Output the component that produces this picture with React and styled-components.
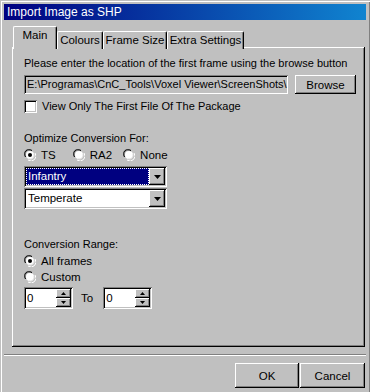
import React from 'react';
import styled, { createGlobalStyle } from 'styled-components';

const GlobalStyle = createGlobalStyle`
  body { margin: 0; background: #c0c0c0; }
  * { box-sizing: border-box; }
`;

const raised = `inset -1px -1px #000, inset 1px 1px #fff, inset -2px -2px #808080, inset 2px 2px #c0c0c0`;
const sunken = `inset 1px 1px #808080, inset -1px -1px #fff, inset 2px 2px #000, inset -2px -2px #c0c0c0`;

const Window = styled.div`
  width: 370px;
  height: 392px;
  background: #c0c0c0;
  box-shadow: inset 1px 1px #c0c0c0, inset 2px 2px #fff, inset -1px 0 #808080;
  padding: 4px 4px 0 4px;
  font-family: "Liberation Sans", Arial, sans-serif;
  font-size: 11px;
  color: #000;
  display: flex;
  flex-direction: column;
  overflow: hidden;
`;

const TitleBar = styled.div`
  height: 16px;
  background: linear-gradient(to right, #000080, #1084d0);
  color: #fff;
  font-size: 12px;
  line-height: 16px;
  padding-left: 3px;
`;

const TabStrip = styled.div`
  display: flex;
  align-items: flex-end;
  margin: 6px 0 -2px 9px;
  height: 23px;
  position: relative;
  z-index: 1;
`;

const Tab = styled.div`
  width: ${({ w }) => w}px;
  height: ${({ active }) => (active ? 23 : 18)}px;
  background: #c0c0c0;
  border-top: 1px solid #fff;
  border-left: 1px solid #fff;
  border-right: 1px solid #000;
  box-shadow: inset -1px 0 #808080;
  border-radius: 2px 2px 0 0;
  text-align: center;
  line-height: ${({ active }) => (active ? 17 : 16)}px;
  font-size: 11.5px;
`;

const Panel = styled.div`
  width: 353px;
  height: 300px;
  margin-left: 8px;
  background: #c0c0c0;
  box-shadow: inset -1px -1px #000, inset 1px 1px #fff, inset -2px -2px #808080;
  padding: 10px 0 0 12px;
  display: flex;
  flex-direction: column;
`;

const Label = styled.div`
  height: 13px;
  line-height: 13px;
  margin-top: ${({ mt }) => mt || 0}px;
  white-space: nowrap;
`;

const Row = styled.div`
  display: flex;
  align-items: center;
  gap: ${({ gap }) => gap || 0}px;
  margin-top: ${({ mt }) => mt || 0}px;
`;

const Field = styled.div`
  width: ${({ w }) => w}px;
  height: ${({ h }) => h || 19}px;
  background: ${({ bg }) => bg || '#fff'};
  box-shadow: ${sunken};
  padding: 0 3px;
  line-height: ${({ h }) => h || 19}px;
  white-space: nowrap;
  overflow: hidden;
  display: flex;
  align-items: center;
`;

const Button = styled.div`
  width: ${({ w }) => w}px;
  height: ${({ h }) => h}px;
  box-shadow: ${raised};
  background: #c0c0c0;
  display: flex;
  align-items: center;
  justify-content: center;
  font-size: 11.5px;
`;

const ArrowButton = styled.div`
  width: ${({ w }) => w}px;
  height: ${({ h }) => h}px;
  box-shadow: ${raised};
  background: #c0c0c0;
  display: flex;
  align-items: center;
  justify-content: center;
  flex-shrink: 0;
`;

const Combo = styled.div`
  width: 143px;
  height: 21px;
  background: #fff;
  box-shadow: ${sunken};
  padding: 2px;
  display: flex;
  align-items: stretch;
  margin-top: ${({ mt }) => mt || 0}px;
`;

const ComboText = styled.div`
  flex: 1;
  padding-left: 2px;
  line-height: 17px;
  font-size: 11.5px;
  color: ${({ sel }) => (sel ? '#fff' : '#000')};
  background: ${({ sel }) => (sel ? '#000080' : 'transparent')};
  outline: ${({ sel }) => (sel ? '1px dotted #fff' : 'none')};
  outline-offset: -1px;
`;

const Check = styled.div`
  width: 13px;
  height: 13px;
  background: #fff;
  box-shadow: ${sunken};
  flex-shrink: 0;
`;

const Option = styled.div`
  display: flex;
  align-items: center;
  gap: 5px;
  height: 13px;
  font-size: 11.5px;
  margin-right: ${({ mr }) => mr || 0}px;
`;

const Spin = styled.div`
  width: 49px;
  height: 22px;
  background: #fff;
  box-shadow: ${sunken};
  padding: 2px;
  display: flex;
`;

const SpinText = styled.div`
  flex: 1;
  padding-left: 1px;
  line-height: 18px;
  font-size: 11.5px;
`;

const SpinButtons = styled.div`
  display: flex;
  flex-direction: column;
  width: 15px;
`;

const ToLabel = styled.span`
  font-size: 11.5px;
  margin: 0 10px 0 8px;
`;

const Separator = styled.div`
  margin-top: 7px;
  height: 2px;
  border-top: 1px solid #808080;
  border-bottom: 1px solid #fff;
`;

const Footer = styled.div`
  display: flex;
  justify-content: flex-end;
  gap: 1px;
  margin-top: 7px;
  padding-right: 1px;
`;

const Radio = ({ checked }) => (
  <svg width="12" height="12" viewBox="0 0 12 12" style={{ flexShrink: 0 }}>
    <path d="M1 8 A5 5 0 0 1 8 1" stroke="#808080" strokeWidth="1" fill="none" />
    <path d="M2 8 A4 4 0 0 1 8 2" stroke="#000" strokeWidth="1" fill="none" />
    <circle cx="6" cy="6" r="4" fill="#fff" />
    <path d="M11 4 A5 5 0 0 1 4 11" stroke="#fff" strokeWidth="1" fill="none" />
    <path d="M10 5 A4 4 0 0 1 5 10" stroke="#dfdfdf" strokeWidth="1" fill="none" />
    {checked && <circle cx="6" cy="6" r="2" fill="#000" />}
  </svg>
);

const Down = () => (
  <svg width="7" height="4" viewBox="0 0 7 4">
    <path d="M0 0 H7 L3.5 4 Z" fill="#000" />
  </svg>
);

const Up = () => (
  <svg width="5" height="3" viewBox="0 0 5 3">
    <path d="M0 3 H5 L2.5 0 Z" fill="#000" />
  </svg>
);

const SmallDown = () => (
  <svg width="5" height="3" viewBox="0 0 5 3">
    <path d="M0 0 H5 L2.5 3 Z" fill="#000" />
  </svg>
);

const SpinBox = ({ value }) => (
  <Spin>
    <SpinText>{value}</SpinText>
    <SpinButtons>
      <ArrowButton w={15} h={9}><Up /></ArrowButton>
      <ArrowButton w={15} h={9}><SmallDown /></ArrowButton>
    </SpinButtons>
  </Spin>
);

const ComboBox = ({ value, selected, mt }) => (
  <Combo mt={mt}>
    <ComboText sel={selected}>{value}</ComboText>
    <ArrowButton w={16} h={17}><Down /></ArrowButton>
  </Combo>
);

export default function App() {
  return (
    <>
      <GlobalStyle />
      <Window>
        <TitleBar>Import Image as SHP</TitleBar>
        <TabStrip>
          <Tab w={44} active>Main</Tab>
          <Tab w={46}>Colours</Tab>
          <Tab w={64}>Frame Size</Tab>
          <Tab w={77}>Extra Settings</Tab>
        </TabStrip>
        <Panel>
          <Label>Please enter the location of the first frame using the browse button</Label>
          <Row mt={5} gap={7}>
            <Field w={264} h={19} bg="#c0c0c0">E:\Programas\CnC_Tools\Voxel Viewer\ScreenShots\</Field>
            <Button w={61} h={19}>Browse</Button>
          </Row>
          <Row mt={6} gap={5}>
            <Check />
            <Label>View Only The First File Of The Package</Label>
          </Row>
          <Label mt={19}>Optimize Conversion For:</Label>
          <Row mt={3}>
            <Option mr={17}><Radio checked />TS</Option>
            <Option mr={11}><Radio />RA2</Option>
            <Option><Radio />None</Option>
          </Row>
          <ComboBox mt={5} value="Infantry" selected />
          <ComboBox mt={1} value="Temperate" />
          <Label mt={29}>Conversion Range:</Label>
          <Row mt={3}>
            <Option><Radio checked />All frames</Option>
          </Row>
          <Row mt={3}>
            <Option><Radio />Custom</Option>
          </Row>
          <Row mt={4}>
            <SpinBox value="0" />
            <ToLabel>To</ToLabel>
            <SpinBox value="0" />
          </Row>
        </Panel>
        <Separator />
        <Footer>
          <Button w={64} h={25}>OK</Button>
          <Button w={65} h={25}>Cancel</Button>
        </Footer>
      </Window>
    </>
  );
}
